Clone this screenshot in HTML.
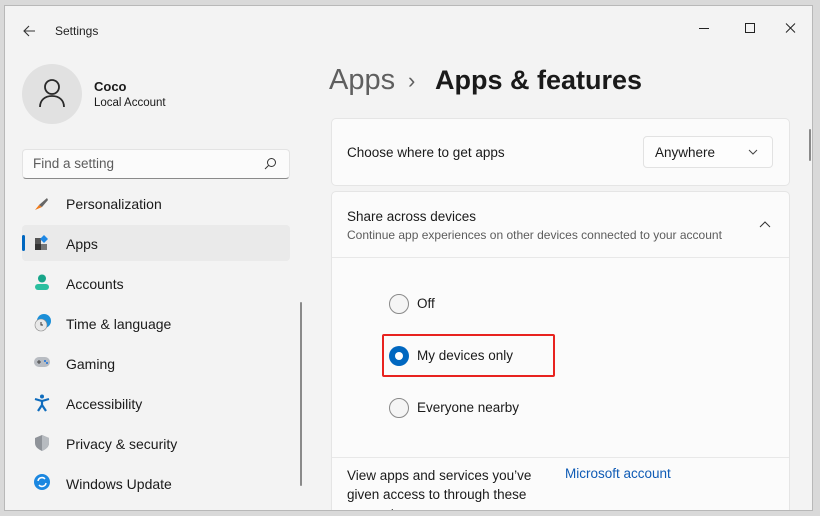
<!DOCTYPE html>
<html><head><style>
*{box-sizing:border-box;margin:0;padding:0}
body{width:820px;height:516px;background:#d9d9d9;font-family:"Liberation Sans",sans-serif;position:relative;overflow:hidden;color:#1a1a1a}
.win{position:absolute;left:4px;top:5px;width:809px;height:506px;background:#f3f3f3;border:1px solid #b8b8b8;overflow:hidden}
.a{position:absolute}
.t{position:absolute;white-space:nowrap}
.nav{position:absolute;left:61px;font-size:14px;color:#1a1a1a}
.card{position:absolute;left:326px;width:459px;background:#fbfbfb;border:1px solid #e5e5e5;border-radius:5px}
.radio{position:absolute;width:20px;height:20px;border-radius:50%;border:1px solid #8a8a8a;background:#f5f5f5}
</style></head><body>
<div class="win">
<svg class="a" style="left:17px;top:18px" width="14" height="14" viewBox="0 0 14 14"><path d="M13 7H2M7 2L2 7l5 5" stroke="#333" stroke-width="1.1" fill="none"/></svg>
<div class="t" style="left:50px;top:18px;font-size:12px;color:#222">Settings</div>
<svg class="a" style="left:692px;top:16px" width="110" height="14"><path d="M2 6.5h10" stroke="#222"/><rect x="48.5" y="1.5" width="9" height="9" fill="none" stroke="#222"/><path d="M89 1.5l9 9M98 1.5l-9 9" stroke="#222"/></svg>
<div class="a" style="left:17px;top:58px;width:60px;height:60px;border-radius:50%;background:#e1e1e1"></div>
<svg class="a" style="left:33px;top:72px" width="28" height="30" viewBox="0 0 28 30"><circle cx="14" cy="9" r="7" fill="none" stroke="#2a2a2a" stroke-width="1.8"/><path d="M2 29c0-7 5-11 12-11s12 4 12 11" fill="none" stroke="#2a2a2a" stroke-width="1.8"/></svg>
<div class="t" style="left:89px;top:73px;font-size:13px;font-weight:bold">Coco</div>
<div class="t" style="left:89px;top:91px;font-size:11.5px">Local Account</div>
<div class="a" style="left:17px;top:143px;width:268px;height:30px;background:#fbfbfb;border:1px solid #e3e3e3;border-bottom-color:#8a8a8a;border-radius:4px"></div>
<div class="t" style="left:28px;top:150px;font-size:13.5px;color:#5c5c5c">Find a setting</div>
<svg class="a" style="left:259px;top:151px" width="13" height="13"><circle cx="7.5" cy="5.5" r="4" fill="none" stroke="#333"/><path d="M4.5 8.5L1 12" stroke="#333"/></svg>
<svg class="a" style="left:28px;top:190px" width="16" height="16"><path d="M2 14l4-5 3 2z" fill="#f07a1a"/><path d="M6 9l8-7 1 2-6 7z" fill="#666"/></svg>
<div class="nav" style="top:190px">Personalization</div>
<div class="a" style="left:17px;top:219px;width:268px;height:36px;background:#eaeaea;border-radius:4px"></div>
<div class="a" style="left:17px;top:229px;width:3px;height:16px;background:#0067c0;border-radius:2px"></div>
<svg class="a" style="left:29px;top:229px" width="16" height="16"><rect x="1" y="3" width="6" height="6" fill="#555"/><rect x="1" y="9" width="6" height="6" fill="#333"/><rect x="7" y="9" width="6" height="6" fill="#777"/><path d="M10 0l4 4-4 4-4-4z" fill="#1e88e5"/></svg>
<div class="nav" style="top:230px">Apps</div>
<svg class="a" style="left:29px;top:268px" width="16" height="16"><circle cx="8" cy="4.5" r="4" fill="#17a589"/><rect x="1" y="10" width="14" height="6" rx="3" fill="#2bbf9f"/></svg>
<div class="nav" style="top:270px">Accounts</div>
<svg class="a" style="left:29px;top:308px" width="18" height="18"><circle cx="10" cy="7" r="7" fill="#1b8fd8"/><circle cx="7" cy="11" r="6" fill="#e8e8e8" stroke="#888" stroke-width=".6"/><path d="M7 8v3h2" stroke="#333" fill="none"/></svg>
<div class="nav" style="top:310px">Time &amp; language</div>
<svg class="a" style="left:28px;top:349px" width="18" height="14"><rect x="1" y="2" width="16" height="10" rx="5" fill="#b8bcc2"/><path d="M4 7h4M6 5v4" stroke="#444"/><circle cx="12" cy="6" r="1" fill="#1b6fd8"/><circle cx="14" cy="8" r="1" fill="#1b6fd8"/></svg>
<div class="nav" style="top:350px">Gaming</div>
<svg class="a" style="left:29px;top:388px" width="16" height="18"><circle cx="8" cy="2.5" r="2" fill="#0f6cbd"/><path d="M1 5l7 2 7-2M8 7v4l-4 6M8 11l4 6" stroke="#0f6cbd" stroke-width="2.2" fill="none"/></svg>
<div class="nav" style="top:390px">Accessibility</div>
<svg class="a" style="left:29px;top:428px" width="16" height="17"><path d="M8 1l7 3v5c0 4-3 6-7 8-4-2-7-4-7-8V4z" fill="#8f9399"/><path d="M8 1l7 3v5c0 4-3 6-7 8z" fill="#b7bbc0"/></svg>
<div class="nav" style="top:430px">Privacy &amp; security</div>
<svg class="a" style="left:28px;top:467px" width="18" height="18"><circle cx="9" cy="9" r="8" fill="#1b87e0"/><path d="M5 8a4 4 0 0 1 7-2M13 10a4 4 0 0 1-7 2" stroke="#fff" stroke-width="1.5" fill="none"/></svg>
<div class="nav" style="top:470px">Windows Update</div>
<div class="a" style="left:295px;top:296px;width:2px;height:184px;background:#8a8a8a;border-radius:1px"></div>
<div class="t" style="left:324px;top:58px;font-size:29px;color:#5f5f5f">Apps</div>
<div class="t" style="left:403px;top:62px;font-size:22px;color:#5f5f5f">›</div>
<div class="t" style="left:430px;top:59px;font-size:27px;font-weight:bold;color:#1a1a1a">Apps &amp; features</div>
<div class="card" style="top:112px;height:68px"></div>
<div class="t" style="left:342px;top:139px;font-size:13.5px">Choose where to get apps</div>
<div class="a" style="left:638px;top:130px;width:130px;height:32px;background:#fdfdfd;border:1px solid #e2e2e2;border-radius:4px"></div>
<div class="t" style="left:650px;top:139px;font-size:13.5px">Anywhere</div>
<svg class="a" style="left:743px;top:143px" width="10" height="6"><path d="M1 1l4 4 4-4" stroke="#444" fill="none"/></svg>
<div class="card" style="top:185px;height:340px"></div>
<div class="a" style="left:327px;top:251px;width:457px;height:1px;background:#e8e8e8"></div>
<div class="t" style="left:342px;top:203px;font-size:13.5px">Share across devices</div>
<div class="t" style="left:342px;top:222px;font-size:12px;color:#5c5c5c">Continue app experiences on other devices connected to your account</div>
<svg class="a" style="left:754px;top:215px" width="12" height="7"><path d="M1 6l5-5 5 5" stroke="#333" fill="none"/></svg>
<div class="radio" style="left:384px;top:288px"></div>
<div class="t" style="left:412px;top:290px;font-size:13.5px">Off</div>
<div class="a" style="left:377px;top:328px;width:173px;height:43px;border:2px solid #e8231f;border-radius:2px"></div>
<div class="a" style="left:384px;top:340px;width:20px;height:20px;border-radius:50%;background:#0067c0"></div>
<div class="a" style="left:390px;top:346px;width:8px;height:8px;border-radius:50%;background:#fff"></div>
<div class="t" style="left:412px;top:342px;font-size:13.5px">My devices only</div>
<div class="radio" style="left:384px;top:392px"></div>
<div class="t" style="left:412px;top:394px;font-size:13.5px">Everyone nearby</div>
<div class="a" style="left:327px;top:451px;width:457px;height:1px;background:#e8e8e8"></div>
<div class="t" style="left:342px;top:460px;font-size:13.5px;line-height:19px;white-space:normal;width:200px">View apps and services you’ve given access to through these accounts:</div>
<div class="t" style="left:560px;top:460px;font-size:13.5px;color:#0f5bb5">Microsoft account</div>
<div class="t" style="left:560px;top:503px;font-size:13.5px;color:#0f5bb5">Work and school accounts</div>
<div class="a" style="left:804px;top:123px;width:2px;height:32px;background:#8a8a8a;border-radius:1px"></div>
</div>
</body></html>
